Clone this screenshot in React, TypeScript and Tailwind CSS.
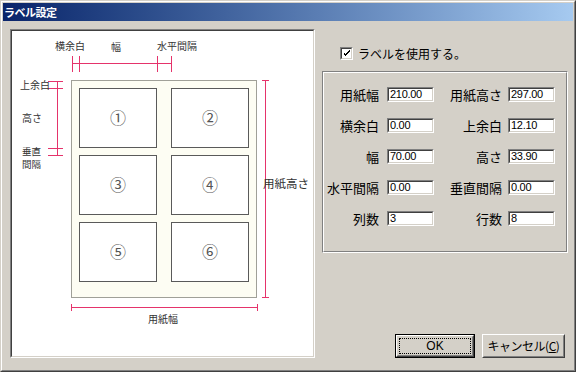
const RED = "#e5336b";
const JP = "font-['Noto_Sans_CJK_JP','Noto_Sans',sans-serif]";

type Field = { label: string; value: string };

const rows: [Field, Field][] = [
  [{ label: "用紙幅", value: "210.00" }, { label: "用紙高さ", value: "297.00" }],
  [{ label: "横余白", value: "0.00" }, { label: "上余白", value: "12.10" }],
  [{ label: "幅", value: "70.00" }, { label: "高さ", value: "33.90" }],
  [{ label: "水平間隔", value: "0.00" }, { label: "垂直間隔", value: "0.00" }],
  [{ label: "列数", value: "3" }, { label: "行数", value: "8" }],
];

function TextBox({ value }: { value: string }) {
  return (
    <div className="w-[47px] h-[15px] border border-t-[#808080] border-l-[#808080] border-r-white border-b-white">
      <div className="h-full border border-t-[#404040] border-l-[#404040] border-r-[#d4d0c8] border-b-[#d4d0c8] bg-white flex items-center pl-[1px] text-[11px] leading-none text-black font-['Liberation_Sans',Arial,sans-serif] tracking-[-0.3px]">
        {value}
      </div>
    </div>
  );
}

function Diagram() {
  const cols = [79, 171];
  const rowsY = [88, 155, 222];
  const nums = ["①", "②", "③", "④", "⑤", "⑥"];
  return (
    <svg
      width={301}
      height={325}
      viewBox="12 31 301 325"
      className={`block ${JP}`}
    >
      <rect x={71.5} y={80.5} width={185} height={217} fill="#fdfdf3" stroke="#a0a098" />
      {rowsY.map((y, r) =>
        cols.map((x, c) => (
          <g key={`${r}-${c}`}>
            <rect x={x + 0.5} y={y + 0.5} width={77} height={59} fill="#ffffff" stroke="#5a5a5a" />
            <text
              x={x + 39}
              y={y + 36}
              textAnchor="middle"
              fontSize={16}
              fill="#555"
            >
              {nums[r * 2 + c]}
            </text>
          </g>
        ))
      )}

      <g stroke={RED} strokeWidth={1} shapeRendering="crispEdges">
        {/* top dimensions */}
        <line x1={72} y1={63.5} x2={172} y2={63.5} />
        {[72.5, 79.5, 157.5, 171.5].map((x) => (
          <line key={x} x1={x} y1={56} x2={x} y2={72} />
        ))}
        {/* left dimensions */}
        <line x1={57.5} y1={81} x2={57.5} y2={156} />
        {[81.5, 88.5, 148.5, 155.5].map((y) => (
          <line key={y} x1={48} y1={y} x2={63} y2={y} />
        ))}
        {/* paper height */}
        <line x1={265.5} y1={80} x2={265.5} y2={298} />
        <line x1={262} y1={80.5} x2={269} y2={80.5} />
        <line x1={262} y1={297.5} x2={269} y2={297.5} />
        {/* paper width */}
        <line x1={71} y1={307.5} x2={258} y2={307.5} />
        <line x1={71.5} y1={304} x2={71.5} y2={311} />
        <line x1={257.5} y1={304} x2={257.5} y2={311} />
      </g>

      <g fill="#333" fontSize={10}>
        <text x={55} y={50}>横余白</text>
        <text x={111} y={51}>幅</text>
        <text x={157} y={50}>水平間隔</text>
        <text x={20} y={89}>上余白</text>
        <text x={22} y={122}>高さ</text>
        <text x={22} y={155} fontSize={9.5}>垂直</text>
        <text x={22} y={168} fontSize={9.5}>間隔</text>
        <text x={148} y={323}>用紙幅</text>
        <text x={263} y={188} fontSize={11.5}>用紙高さ</text>
      </g>
    </svg>
  );
}

export default function App() {
  return (
    <div className={`w-[576px] h-[372px] bg-[#d4d0c8] border border-t-[#d4d0c8] border-l-[#d4d0c8] border-r-[#404040] border-b-[#404040] ${JP}`}>
      <div className="h-full border border-t-white border-l-white border-r-[#808080] border-b-[#808080] p-px flex flex-col">
        {/* Title bar */}
        <div className="h-[18px] bg-linear-to-r from-[#0a246a] to-[#a6caf0] text-white text-[11px] font-bold leading-none flex items-center pl-[1px] tracking-[-0.5px]">
          ラベル設定
        </div>

        <div className="flex gap-[7px] pl-[7px] pt-[8px]">
          {/* Diagram panel */}
          <div className="w-[305px] h-[329px] border border-t-[#808080] border-l-[#808080] border-r-white border-b-white">
            <div className="h-full border border-t-[#404040] border-l-[#404040] border-r-[#d4d0c8] border-b-[#d4d0c8] bg-white">
              <Diagram />
            </div>
          </div>

          {/* Settings column */}
          <div className="w-[246px] h-[329px] flex flex-col">
            <div className="mt-[18px] ml-[18px] h-[13px] flex items-center gap-[5px]">
              <div className="w-[13px] h-[13px] border border-t-[#808080] border-l-[#808080] border-r-white border-b-white">
                <div className="h-full border border-t-[#404040] border-l-[#404040] border-r-[#d4d0c8] border-b-[#d4d0c8] bg-white flex items-center justify-center">
                  <svg width="7" height="7" viewBox="0 0 7 7" shapeRendering="crispEdges">
                    <path d="M0 2h1v3h1v1h1V5h1V4h1V3h1V2h1V0H6v1H5v1H4v1H3v1H2V3H1V2z" fill="#000" />
                  </svg>
                </div>
              </div>
              <span className="text-[12px] leading-none text-black">ラベルを使用する。</span>
            </div>

            <div className="mt-[11px] h-[182px] border border-t-[#808080] border-l-[#808080] border-r-white border-b-white">
              <div className="h-full border border-t-white border-l-white border-r-[#808080] border-b-[#808080] pt-[14px] flex flex-col gap-[16px]">
                {rows.map(([a, b]) => (
                  <div key={a.label} className="flex items-center h-[15px] text-[13px] leading-none text-black">
                    <span className="w-[55px] text-right whitespace-nowrap">{a.label}</span>
                    <div className="ml-[8px]">
                      <TextBox value={a.value} />
                    </div>
                    <span className="w-[68px] text-right whitespace-nowrap">{b.label}</span>
                    <div className="ml-[6px]">
                      <TextBox value={b.value} />
                    </div>
                  </div>
                ))}
              </div>
            </div>

            <div className="mt-auto flex justify-end gap-[7px] pr-[3px] text-[12px] leading-none text-black">
              <button
                type="button"
                className="w-[80px] h-[24px] border border-black p-0 bg-[#d4d0c8]"
              >
                <div className="h-full border border-t-white border-l-white border-r-[#404040] border-b-[#404040]">
                  <div className="h-full border border-transparent border-r-[#808080] border-b-[#808080] p-px">
                    <div className="h-full border border-dotted border-black flex items-center justify-center font-['Liberation_Sans',Arial,sans-serif]">
                      OK
                    </div>
                  </div>
                </div>
              </button>
              <button
                type="button"
                className="w-[83px] h-[24px] border border-t-white border-l-white border-r-[#404040] border-b-[#404040] p-0 bg-[#d4d0c8]"
              >
                <div className="h-full border border-transparent border-r-[#808080] border-b-[#808080] flex items-center justify-center tracking-[-0.5px]">
                  キャンセル(<span className="underline">C</span>)
                </div>
              </button>
            </div>
          </div>
        </div>
      </div>
    </div>
  );
}
